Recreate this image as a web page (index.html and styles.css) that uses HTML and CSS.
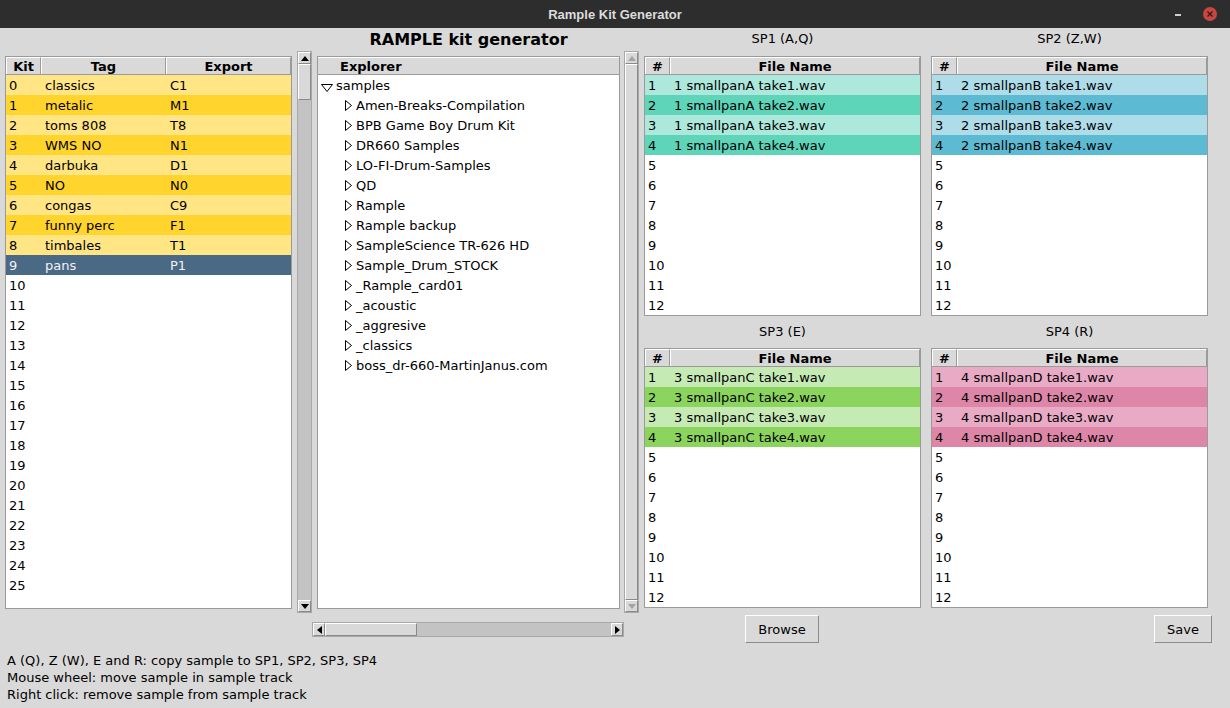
FILE: index.html
```html
<!DOCTYPE html>
<html>
<head>
<meta charset="utf-8">
<link rel="stylesheet" href="styles.css">
</head>
<body>
<div class="titlebar">
  <span class="wtitle">Rample Kit Generator</span>
  <span class="wmin"></span>
  <span class="wclose"><svg width="14" height="14" viewBox="0 0 14 14"><circle cx="7" cy="7" r="7" fill="#c7463f"/><path d="M4.5 4.5 L9.5 9.5 M9.5 4.5 L4.5 9.5" stroke="#3a1a18" stroke-width="1.4"/></svg></span>
</div>
<div class="app">
  <div class="top">
    <div class="kitcol">
      <div class="tree kit">
        <div class="head"><div class="hc c-kit">Kit</div><div class="hc c-tag">Tag</div><div class="hc c-exp">Export</div></div>
        <div class="row y1"><span class="c-kit">0</span><span class="c-tag">classics</span><span class="c-exp">C1</span></div>
        <div class="row y2"><span class="c-kit">1</span><span class="c-tag">metalic</span><span class="c-exp">M1</span></div>
        <div class="row y1"><span class="c-kit">2</span><span class="c-tag">toms 808</span><span class="c-exp">T8</span></div>
        <div class="row y2"><span class="c-kit">3</span><span class="c-tag">WMS NO</span><span class="c-exp">N1</span></div>
        <div class="row y1"><span class="c-kit">4</span><span class="c-tag">darbuka</span><span class="c-exp">D1</span></div>
        <div class="row y2"><span class="c-kit">5</span><span class="c-tag">NO</span><span class="c-exp">N0</span></div>
        <div class="row y1"><span class="c-kit">6</span><span class="c-tag">congas</span><span class="c-exp">C9</span></div>
        <div class="row y2"><span class="c-kit">7</span><span class="c-tag">funny perc</span><span class="c-exp">F1</span></div>
        <div class="row y1"><span class="c-kit">8</span><span class="c-tag">timbales</span><span class="c-exp">T1</span></div>
        <div class="row sel"><span class="c-kit">9</span><span class="c-tag">pans</span><span class="c-exp">P1</span></div>
        <div class="row"><span class="c-kit">10</span></div>
        <div class="row"><span class="c-kit">11</span></div>
        <div class="row"><span class="c-kit">12</span></div>
        <div class="row"><span class="c-kit">13</span></div>
        <div class="row"><span class="c-kit">14</span></div>
        <div class="row"><span class="c-kit">15</span></div>
        <div class="row"><span class="c-kit">16</span></div>
        <div class="row"><span class="c-kit">17</span></div>
        <div class="row"><span class="c-kit">18</span></div>
        <div class="row"><span class="c-kit">19</span></div>
        <div class="row"><span class="c-kit">20</span></div>
        <div class="row"><span class="c-kit">21</span></div>
        <div class="row"><span class="c-kit">22</span></div>
        <div class="row"><span class="c-kit">23</span></div>
        <div class="row"><span class="c-kit">24</span></div>
        <div class="row"><span class="c-kit">25</span></div>
      </div>
    </div>
    <div class="vscroll">
      <div class="sbtn"><span class="tri-up"></span></div>
      <div class="thumb vthumb"></div>
      <div class="trough"></div>
      <div class="sbtn"><span class="tri-down"></span></div>
    </div>
    <div class="expcol">
      <div class="apptitle">RAMPLE kit generator</div>
      <div class="tree explorer">
        <div class="head"><div class="hc c-explorer">Explorer</div></div>
        <div class="row trow"><svg class="tw-open" width="12" height="8" viewBox="0 0 12 8"><path d="M0.5 0.5 H11.5 L6 7.5 Z" fill="none" stroke="#000"/></svg><span>samples</span></div>
        <div class="row trow child"><svg class="tw" width="7" height="11" viewBox="0 0 7 11"><path d="M0.5 0.5 L6.5 5.5 L0.5 10.5 Z" fill="none" stroke="#000"/></svg><span>Amen-Breaks-Compilation</span></div>
        <div class="row trow child"><svg class="tw" width="7" height="11" viewBox="0 0 7 11"><path d="M0.5 0.5 L6.5 5.5 L0.5 10.5 Z" fill="none" stroke="#000"/></svg><span>BPB Game Boy Drum Kit</span></div>
        <div class="row trow child"><svg class="tw" width="7" height="11" viewBox="0 0 7 11"><path d="M0.5 0.5 L6.5 5.5 L0.5 10.5 Z" fill="none" stroke="#000"/></svg><span>DR660 Samples</span></div>
        <div class="row trow child"><svg class="tw" width="7" height="11" viewBox="0 0 7 11"><path d="M0.5 0.5 L6.5 5.5 L0.5 10.5 Z" fill="none" stroke="#000"/></svg><span>LO-FI-Drum-Samples</span></div>
        <div class="row trow child"><svg class="tw" width="7" height="11" viewBox="0 0 7 11"><path d="M0.5 0.5 L6.5 5.5 L0.5 10.5 Z" fill="none" stroke="#000"/></svg><span>QD</span></div>
        <div class="row trow child"><svg class="tw" width="7" height="11" viewBox="0 0 7 11"><path d="M0.5 0.5 L6.5 5.5 L0.5 10.5 Z" fill="none" stroke="#000"/></svg><span>Rample</span></div>
        <div class="row trow child"><svg class="tw" width="7" height="11" viewBox="0 0 7 11"><path d="M0.5 0.5 L6.5 5.5 L0.5 10.5 Z" fill="none" stroke="#000"/></svg><span>Rample backup</span></div>
        <div class="row trow child"><svg class="tw" width="7" height="11" viewBox="0 0 7 11"><path d="M0.5 0.5 L6.5 5.5 L0.5 10.5 Z" fill="none" stroke="#000"/></svg><span>SampleScience TR-626 HD</span></div>
        <div class="row trow child"><svg class="tw" width="7" height="11" viewBox="0 0 7 11"><path d="M0.5 0.5 L6.5 5.5 L0.5 10.5 Z" fill="none" stroke="#000"/></svg><span>Sample_Drum_STOCK</span></div>
        <div class="row trow child"><svg class="tw" width="7" height="11" viewBox="0 0 7 11"><path d="M0.5 0.5 L6.5 5.5 L0.5 10.5 Z" fill="none" stroke="#000"/></svg><span>_Rample_card01</span></div>
        <div class="row trow child"><svg class="tw" width="7" height="11" viewBox="0 0 7 11"><path d="M0.5 0.5 L6.5 5.5 L0.5 10.5 Z" fill="none" stroke="#000"/></svg><span>_acoustic</span></div>
        <div class="row trow child"><svg class="tw" width="7" height="11" viewBox="0 0 7 11"><path d="M0.5 0.5 L6.5 5.5 L0.5 10.5 Z" fill="none" stroke="#000"/></svg><span>_aggresive</span></div>
        <div class="row trow child"><svg class="tw" width="7" height="11" viewBox="0 0 7 11"><path d="M0.5 0.5 L6.5 5.5 L0.5 10.5 Z" fill="none" stroke="#000"/></svg><span>_classics</span></div>
        <div class="row trow child"><svg class="tw" width="7" height="11" viewBox="0 0 7 11"><path d="M0.5 0.5 L6.5 5.5 L0.5 10.5 Z" fill="none" stroke="#000"/></svg><span>boss_dr-660-MartinJanus.com</span></div>
      </div>
    </div>
    <div class="vscroll disabled">
      <div class="sbtn"><span class="tri-up"></span></div>
      <div class="thumb full"></div>
      <div class="sbtn"><span class="tri-down"></span></div>
    </div>
    <div class="spgrid">
      <div class="sppanel">
        <div class="splabel">SP1 (A,Q)</div>
        <div class="tree sp">
          <div class="head"><div class="hc c-num">#</div><div class="hc c-file">File Name</div></div>
          <div class="row a1"><span class="c-num">1</span><span class="c-file">1 smallpanA take1.wav</span></div>
          <div class="row a2"><span class="c-num">2</span><span class="c-file">1 smallpanA take2.wav</span></div>
          <div class="row a1"><span class="c-num">3</span><span class="c-file">1 smallpanA take3.wav</span></div>
          <div class="row a2"><span class="c-num">4</span><span class="c-file">1 smallpanA take4.wav</span></div>
          <div class="row"><span class="c-num">5</span></div>
          <div class="row"><span class="c-num">6</span></div>
          <div class="row"><span class="c-num">7</span></div>
          <div class="row"><span class="c-num">8</span></div>
          <div class="row"><span class="c-num">9</span></div>
          <div class="row"><span class="c-num">10</span></div>
          <div class="row"><span class="c-num">11</span></div>
          <div class="row"><span class="c-num">12</span></div>
        </div>
      </div>
      <div class="sppanel">
        <div class="splabel">SP2 (Z,W)</div>
        <div class="tree sp">
          <div class="head"><div class="hc c-num">#</div><div class="hc c-file">File Name</div></div>
          <div class="row b1"><span class="c-num">1</span><span class="c-file">2 smallpanB take1.wav</span></div>
          <div class="row b2"><span class="c-num">2</span><span class="c-file">2 smallpanB take2.wav</span></div>
          <div class="row b1"><span class="c-num">3</span><span class="c-file">2 smallpanB take3.wav</span></div>
          <div class="row b2"><span class="c-num">4</span><span class="c-file">2 smallpanB take4.wav</span></div>
          <div class="row"><span class="c-num">5</span></div>
          <div class="row"><span class="c-num">6</span></div>
          <div class="row"><span class="c-num">7</span></div>
          <div class="row"><span class="c-num">8</span></div>
          <div class="row"><span class="c-num">9</span></div>
          <div class="row"><span class="c-num">10</span></div>
          <div class="row"><span class="c-num">11</span></div>
          <div class="row"><span class="c-num">12</span></div>
        </div>
      </div>
      <div class="sppanel">
        <div class="splabel lower">SP3 (E)</div>
        <div class="tree sp">
          <div class="head"><div class="hc c-num">#</div><div class="hc c-file">File Name</div></div>
          <div class="row c1"><span class="c-num">1</span><span class="c-file">3 smallpanC take1.wav</span></div>
          <div class="row c2"><span class="c-num">2</span><span class="c-file">3 smallpanC take2.wav</span></div>
          <div class="row c1"><span class="c-num">3</span><span class="c-file">3 smallpanC take3.wav</span></div>
          <div class="row c2"><span class="c-num">4</span><span class="c-file">3 smallpanC take4.wav</span></div>
          <div class="row"><span class="c-num">5</span></div>
          <div class="row"><span class="c-num">6</span></div>
          <div class="row"><span class="c-num">7</span></div>
          <div class="row"><span class="c-num">8</span></div>
          <div class="row"><span class="c-num">9</span></div>
          <div class="row"><span class="c-num">10</span></div>
          <div class="row"><span class="c-num">11</span></div>
          <div class="row"><span class="c-num">12</span></div>
        </div>
      </div>
      <div class="sppanel">
        <div class="splabel lower">SP4 (R)</div>
        <div class="tree sp">
          <div class="head"><div class="hc c-num">#</div><div class="hc c-file">File Name</div></div>
          <div class="row d1"><span class="c-num">1</span><span class="c-file">4 smallpanD take1.wav</span></div>
          <div class="row d2"><span class="c-num">2</span><span class="c-file">4 smallpanD take2.wav</span></div>
          <div class="row d1"><span class="c-num">3</span><span class="c-file">4 smallpanD take3.wav</span></div>
          <div class="row d2"><span class="c-num">4</span><span class="c-file">4 smallpanD take4.wav</span></div>
          <div class="row"><span class="c-num">5</span></div>
          <div class="row"><span class="c-num">6</span></div>
          <div class="row"><span class="c-num">7</span></div>
          <div class="row"><span class="c-num">8</span></div>
          <div class="row"><span class="c-num">9</span></div>
          <div class="row"><span class="c-num">10</span></div>
          <div class="row"><span class="c-num">11</span></div>
          <div class="row"><span class="c-num">12</span></div>
        </div>
      </div>
    </div>
  </div>
  <div class="bottomrow">
    <div class="hscroll">
      <div class="sbtn h"><span class="tri-left"></span></div>
      <div class="thumb hthumb"></div>
      <div class="trough"></div>
      <div class="sbtn h"><span class="tri-right"></span></div>
    </div>
    <button class="btn browse">Browse</button>
    <button class="btn save">Save</button>
  </div>
  <div class="help">
    <div>A (Q), Z (W), E and R: copy sample to SP1, SP2, SP3, SP4</div>
    <div>Mouse wheel: move sample in sample track</div>
    <div>Right click: remove sample from sample track</div>
  </div>
</div>
</body>
</html>
```

FILE: styles.css
```css
* { box-sizing: border-box; }
html, body { margin: 0; padding: 0; }
body {
  width: 1230px;
  height: 708px;
  overflow: hidden;
  background: #d9d9d9;
  font-family: "DejaVu Sans", sans-serif;
  font-size: 13px;
  color: #000;
}
.titlebar {
  height: 28px;
  background: #2d2d2d;
  display: flex;
  align-items: center;
  justify-content: center;
  position: relative;
}
.wtitle {
  font-family: "Liberation Sans", sans-serif;
  font-weight: bold;
  font-size: 13px;
  color: #dcdcdc;
}
.wmin {
  position: absolute;
  left: 1175px;
  top: 14px;
  width: 6px;
  height: 2px;
  background: #cfcfcf;
}
.wclose {
  position: absolute;
  left: 1203px;
  top: 7px;
  width: 14px;
  height: 14px;
}
.wclose svg { display: block; }
.app { padding-left: 5px; }
.top { display: flex; height: 585px; }
.kitcol { width: 287px; padding-top: 28px; }
.tree {
  background: #fff;
  border: 1px solid #9a9a9a;
  overflow: hidden;
}
.kit, .explorer { height: 553px; }
.sp { height: 260px; }
.head {
  display: flex;
  height: 18px;
  background: #d9d9d9;
  border-bottom: 1px solid #9a9a9a;
  font-weight: bold;
}
.hc {
  text-align: center;
  line-height: 17px;
  border-left: 1px solid #fff;
  border-right: 1px solid #9a9a9a;
  border-top: 1px solid #fff;
}
.row {
  display: flex;
  height: 20px;
  line-height: 21px;
  white-space: nowrap;
}
.row span { padding-left: 4px; }
.row span.c-kit, .row span.c-num { padding-left: 3px; }
.c-kit { width: 35px; }
.c-tag { width: 125px; }
.c-exp { width: 125px; }
.y1 { background: #ffe583; }
.y2 { background: #ffd42c; }
.sel { background: #4a6984; color: #f2f2f2; }
.vscroll {
  width: 15px;
  height: 562px;
  margin-top: 23px;
  margin-left: 5px;
  background: #c3c3c3;
  border: 1px solid #a8a8a8;
  display: flex;
  flex-direction: column;
}
.sbtn {
  height: 12px;
  background: #d9d9d9;
  border-top: 1px solid #fff;
  border-left: 1px solid #fff;
  border-right: 1px solid #8a8a8a;
  border-bottom: 1px solid #8a8a8a;
  display: flex;
  align-items: center;
  justify-content: center;
}
.sbtn.h { width: 12px; height: 13px; }
.thumb {
  background: #d9d9d9;
  border-top: 1px solid #fff;
  border-left: 1px solid #fff;
  border-right: 1px solid #8a8a8a;
  border-bottom: 1px solid #8a8a8a;
}
.vthumb { height: 36px; }
.trough { flex: 1; }
.full { flex: 1; }
.tri-up { width: 0; height: 0; border-left: 4px solid transparent; border-right: 4px solid transparent; border-bottom: 5px solid #000; }
.tri-down { width: 0; height: 0; border-left: 4px solid transparent; border-right: 4px solid transparent; border-top: 5px solid #000; }
.tri-left { width: 0; height: 0; border-top: 4px solid transparent; border-bottom: 4px solid transparent; border-right: 5px solid #000; }
.tri-right { width: 0; height: 0; border-top: 4px solid transparent; border-bottom: 4px solid transparent; border-left: 5px solid #000; }
.disabled { background: #d9d9d9; margin-left: 4px; }
.disabled .tri-up { border-bottom-color: #a3a3a3; }
.disabled .tri-down { border-top-color: #a3a3a3; }
.expcol { width: 303px; margin-left: 5px; }
.apptitle {
  height: 28px;
  line-height: 24px;
  text-align: center;
  font-weight: bold;
  font-size: 16px;
}
.c-explorer {
  width: 110px;
  border-left: none;
  border-right: none;
  padding-left: 10px;
}
.explorer .head .hc { text-align: left; padding-left: 22px; }
.explorer .head { border-top: 1px solid #fff; }
.explorer .head .hc { border-top: none; }
.trow { align-items: center; }
.trow span { padding-left: 3px; }
.tw-open { margin-left: 3px; margin-top: 5px; }
.child .tw { margin-left: 27px; }
.child span { padding-left: 4px; }
.spgrid {
  margin-left: 5px;
  display: grid;
  grid-template-columns: 277px 277px;
  column-gap: 10px;
  align-content: start;
}
.splabel {
  height: 28px;
  line-height: 22px;
  text-align: center;
}
.splabel.lower { height: 32px; line-height: 31px; }
.c-num { width: 25px; }
.c-file { flex: 1; }
.head .c-num { width: 25px; flex: none; }
.a1 { background: #ade8dc; }
.a2 { background: #5ed4b9; }
.b1 { background: #aedce9; }
.b2 { background: #5cbad3; }
.c1 { background: #c6eab4; }
.c2 { background: #8bd45d; }
.d1 { background: #e8aac4; }
.d2 { background: #dd86a7; }
.bottomrow { display: flex; height: 39px; }
.hscroll {
  margin-left: 307px;
  margin-top: 9px;
  width: 312px;
  height: 15px;
  background: #c3c3c3;
  border: 1px solid #a8a8a8;
  display: flex;
}
.hthumb { width: 92px; }
.btn {
  font-family: "DejaVu Sans", sans-serif;
  font-size: 13px;
  color: #000;
  background: #d9d9d9;
  height: 28px;
  margin-top: 2px;
  padding: 0;
  border-top: 1px solid #fff;
  border-left: 1px solid #fff;
  border-right: 1px solid #8a8a8a;
  border-bottom: 1px solid #8a8a8a;
}
.browse { width: 74px; margin-left: 121px; }
.save { width: 58px; margin-left: 335px; }
.help {
  padding-left: 2px;
  line-height: 17px;
}
```
